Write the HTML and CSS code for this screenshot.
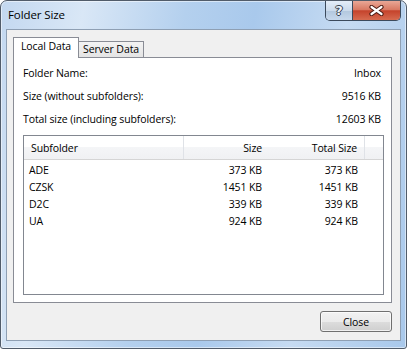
FILE: index.html
```html
<!DOCTYPE html>
<html lang="en">
<head>
    <meta charset="UTF-8">
    <title>Folder Size</title>
    <link rel="stylesheet" href="styles.css">
</head>
<body>
    <div class="window">
        <div class="titlebar">
            <span class="title">Folder Size</span>
            <div class="caption-buttons">
                <span class="btn-help">?</span>
                <span class="btn-close">
                    <svg width="15" height="11" viewBox="0 0 15 11">
                        <path d="M2.5 2 L12.5 9 M12.5 2 L2.5 9" stroke="#4a1a12" stroke-width="4.2" stroke-linecap="round"/>
                        <path d="M2.5 2 L12.5 9 M12.5 2 L2.5 9" stroke="#fff" stroke-width="2.2" stroke-linecap="round"/>
                    </svg>
                </span>
            </div>
        </div>
        <div class="client">
            <div class="tabs">
                <div class="tab active">Local Data</div>
                <div class="tab">Server Data</div>
            </div>
            <div class="panel">
                <div class="info-row"><span>Folder Name:</span><span>Inbox</span></div>
                <div class="info-row"><span>Size (without subfolders):</span><span>9516 KB</span></div>
                <div class="info-row"><span>Total size (including subfolders):</span><span>12603 KB</span></div>
                <div class="list">
                    <div class="list-head">
                        <div class="col name">Subfolder</div>
                        <div class="col num">Size</div>
                        <div class="col num last">Total Size</div>
                        <div class="col filler"></div>
                    </div>
                    <div class="list-body">
                        <div class="list-row"><span class="name">ADE</span><span class="num">373 KB</span><span class="num">373 KB</span></div>
                        <div class="list-row"><span class="name">CZSK</span><span class="num">1451 KB</span><span class="num">1451 KB</span></div>
                        <div class="list-row"><span class="name">D2C</span><span class="num">339 KB</span><span class="num">339 KB</span></div>
                        <div class="list-row"><span class="name">UA</span><span class="num">924 KB</span><span class="num">924 KB</span></div>
                    </div>
                </div>
            </div>
            <div class="footer">
                <button class="close-btn">Close</button>
            </div>
        </div>
    </div>
</body>
</html>
```

FILE: styles.css
```css
body {
    margin: 0;
    font-family: "Open Sans", "Noto Sans", sans-serif;
    font-size: 10.5px;
    letter-spacing: -0.1px;
    color: #000;
}
.window {
    width: 407px;
    height: 349px;
    box-sizing: border-box;
    border: 1px solid #515c6a;
    border-radius: 7px 7px 3px 3px;
    padding: 0 5px 7px;
    display: flex;
    flex-direction: column;
    background: linear-gradient(100deg, #c3d8f0 0%, #d9e7f6 18%, #b4d0ee 40%, #a9c9ec 55%, #c6dbf2 75%, #a8c8eb 100%);
    box-shadow: inset 0 0 0 1px rgba(255, 255, 255, 0.5);
}
.titlebar {
    height: 28px;
    display: flex;
    align-items: flex-start;
}
.title {
    font-size: 11.5px;
    line-height: 17px;
    margin: 5px 0 0 2px;
}
.caption-buttons {
    margin-left: auto;
    display: flex;
    height: 20px;
    box-sizing: border-box;
    border: 1px solid #3c4a5c;
    border-top: none;
    border-radius: 0 0 5px 5px;
    overflow: hidden;
}
.btn-help {
    width: 26px;
    border-right: 1px solid #3c4a5c;
    background: linear-gradient(#e4edf8, #cbdaeb 50%, #b2c7de 51%, #c7d8ec);
    display: flex;
    justify-content: center;
    align-items: center;
    font-family: "DejaVu Sans", sans-serif;
    font-weight: bold;
    font-size: 13px;
    color: #eef3f9;
    text-shadow: 1px 0 #34404e, -1px 0 #34404e, 0 1px #34404e, 0 -1px #34404e;
}
.btn-close {
    width: 47px;
    background: linear-gradient(#e9a796, #d97a64 45%, #c5432c 52%, #d66b50);
    display: flex;
    justify-content: center;
    align-items: center;
}
.client {
    flex: 1;
    background: #f0f0f0;
    border: 1px solid #8e9fb3;
    padding: 7px 8px 8px 6px;
    display: flex;
    flex-direction: column;
}
.tabs {
    display: flex;
    align-items: flex-end;
    height: 20px;
}
.tab {
    box-sizing: border-box;
    height: 16px;
    width: 65px;
    border: 1px solid #898c95;
    border-left: none;
    border-bottom: none;
    background: linear-gradient(#f3f3f3, #e4e4e4);
    text-align: center;
    line-height: 15px;
}
.tab.active {
    position: relative;
    z-index: 1;
    width: 66px;
    height: 21px;
    margin-bottom: -1px;
    padding-top: 1px;
    border-left: 1px solid #898c95;
    background: #fff;
}
.panel {
    flex: 1;
    border: 1px solid #898c95;
    background: #fff;
    padding: 4px 7px 7px 9px;
    display: flex;
    flex-direction: column;
}
.info-row {
    height: 23px;
    line-height: 23px;
    display: flex;
    justify-content: space-between;
    padding-right: 3px;
}
.list {
    flex: 1;
    margin-top: 4px;
    border: 1px solid #828790;
}
.list-head {
    display: grid;
    grid-template-columns: 160px 85px 96px 1fr;
    height: 24px;
    box-sizing: border-box;
    border-bottom: 1px solid #d5d5d5;
    background: linear-gradient(#fff 0%, #fff 48%, #f4f5f7 50%, #f0f1f3 100%);
}
.list-head .col {
    line-height: 22px;
    padding-top: 1px;
    box-sizing: border-box;
}
.list-head .name {
    padding-left: 7px;
    border-right: 1px solid #dfe2e7;
}
.list-head .num {
    text-align: right;
    padding-right: 7px;
}
.list-head .last {
    border-right: 1px solid #dfe2e7;
}
.list-body {
    padding-top: 2px;
}
.list-row {
    display: grid;
    grid-template-columns: 160px 85px 96px;
    height: 17px;
    line-height: 17px;
}
.list-row .name {
    padding-left: 5px;
}
.list-row .num {
    text-align: right;
    padding-right: 7px;
}
.footer {
    margin-top: 8px;
    display: flex;
    justify-content: flex-end;
}
.close-btn {
    width: 72px;
    height: 21px;
    padding: 0;
    border: 1px solid #707070;
    border-radius: 3px;
    background: linear-gradient(#f2f2f2, #ebebeb 50%, #dddddd 51%, #cfcfcf);
    box-shadow: inset 0 0 0 1px rgba(255, 255, 255, 0.7);
    font-family: "Open Sans", "Noto Sans", sans-serif;
    font-size: 10.5px;
    letter-spacing: -0.1px;
    color: #000;
}
```
